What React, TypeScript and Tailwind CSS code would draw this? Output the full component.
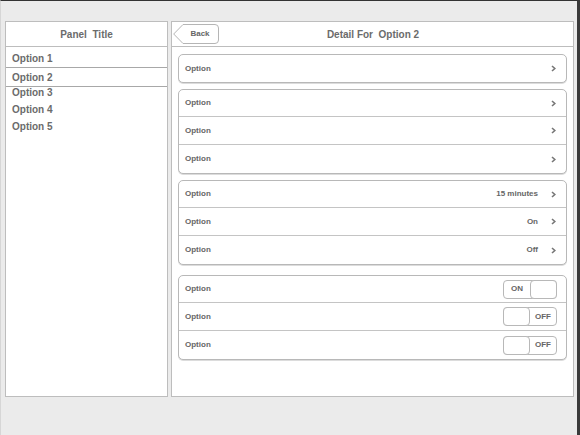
const options = ['Option 1', 'Option 2', 'Option 3', 'Option 4', 'Option 5']

function Chevron() {
  return (
    <svg width="5" height="7" viewBox="0 0 5 7" className="shrink-0">
      <path d="M1 1 L3.8 3.5 L1 6" fill="none" stroke="#777" strokeWidth="1.6" />
    </svg>
  )
}

function Toggle({ on }: { on: boolean }) {
  return (
    <div className="flex h-[19px] w-[54px] rounded-[4px] border border-[#b8b8b8] bg-white">
      {on ? (
        <>
          <div className="flex w-[26px] items-center justify-center text-[8px] font-bold text-[#666]">ON</div>
          <div className="-my-px -mr-px flex-1 rounded-[4px] border border-[#b8b8b8] bg-white" />
        </>
      ) : (
        <>
          <div className="-my-px -ml-px w-[27px] rounded-[4px] border border-[#b8b8b8] bg-white" />
          <div className="flex flex-1 items-center justify-center text-[8px] font-bold text-[#666]">OFF</div>
        </>
      )}
    </div>
  )
}

type Row = { value?: string; toggle?: boolean }

function Group({ rows, className = '' }: { rows: Row[]; className?: string }) {
  return (
    <div
      className={`divide-y divide-[#c4c4c4] rounded-[5px] border border-[#b8b8b8] bg-white shadow-[0_1px_0_#dcdcdc] ${className}`}
    >
      {rows.map((r, i) => (
        <div key={i} className={`flex items-center pl-[6px] pr-[9px] ${i === 0 ? 'h-[27px]' : 'h-[28px]'}`}>
          <span className="flex-1 text-[8px] font-bold text-[#666]">Option</span>
          {r.toggle === undefined ? (
            <div className="flex items-center gap-[13px] pr-[1px]">
              {r.value && <span className="text-[8px] font-bold text-[#666]">{r.value}</span>}
              <Chevron />
            </div>
          ) : (
            <Toggle on={r.toggle} />
          )}
        </div>
      ))}
    </div>
  )
}

function BackButton() {
  return (
    <div className="relative flex h-[20px] w-[46px] items-center justify-center pl-[8px] text-[8px] font-bold text-[#666]">
      <svg width="46" height="20" viewBox="0 0 46 20" className="absolute inset-0">
        <path
          d="M10 0.5 H42 Q45.5 0.5 45.5 4 V16 Q45.5 19.5 42 19.5 H10 L0.7 10 Z"
          fill="#fff"
          stroke="#b5b5b5"
        />
      </svg>
      <span className="relative">Back</span>
    </div>
  )
}

export default function App() {
  return (
    <div className="flex h-[435px] w-[580px] gap-[3px] border-l border-t border-r-[3px] border-l-[#d6d6d6] border-t-[#333] border-r-[#3a3a3a] bg-[#ebebeb] pl-[4px] pt-[20px] font-['Liberation_Sans',Arial,sans-serif]">
      <div className="flex h-[376px] w-[163px] flex-col border border-[#bdbdbd] bg-white">
        <div className="flex h-[25px] shrink-0 items-center justify-center border-b border-[#bdbdbd] text-[10px] font-bold text-[#6b6b6b] whitespace-pre">
          Panel  Title
        </div>
        <div className="pt-[3px]">
          {options.map((o, i) => (
            <div
              key={o}
              className={
                i === 1
                  ? 'flex h-[20px] items-center border-y border-[#a8a8a8] pl-[6px] text-[10px] font-bold text-[#6b6b6b]'
                  : `flex h-[17px] items-center pl-[6px] text-[10px] font-bold text-[#6b6b6b] ${i === 2 ? '-mt-[3px]' : ''}`
              }
            >
              {o}
            </div>
          ))}
        </div>
      </div>
      <div className="flex h-[376px] w-[403px] flex-col border border-[#bdbdbd] bg-white">
        <div className="grid h-[25px] shrink-0 grid-cols-[1fr_auto_1fr] items-center border-b border-[#bdbdbd] pl-[1px]">
          <div className="justify-self-start">
            <BackButton />
          </div>
          <div className="text-[10px] font-bold text-[#6b6b6b] whitespace-pre">Detail For  Option 2</div>
          <div />
        </div>
        <div className="flex flex-col gap-[6px] px-[6px] pt-[7px]">
          <Group rows={[{}]} />
          <Group rows={[{}, {}, {}]} />
          <Group rows={[{ value: '15 minutes' }, { value: 'On' }, { value: 'Off' }]} />
          <Group className="mt-[4px]" rows={[{ toggle: true }, { toggle: false }, { toggle: false }]} />
        </div>
      </div>
    </div>
  )
}
